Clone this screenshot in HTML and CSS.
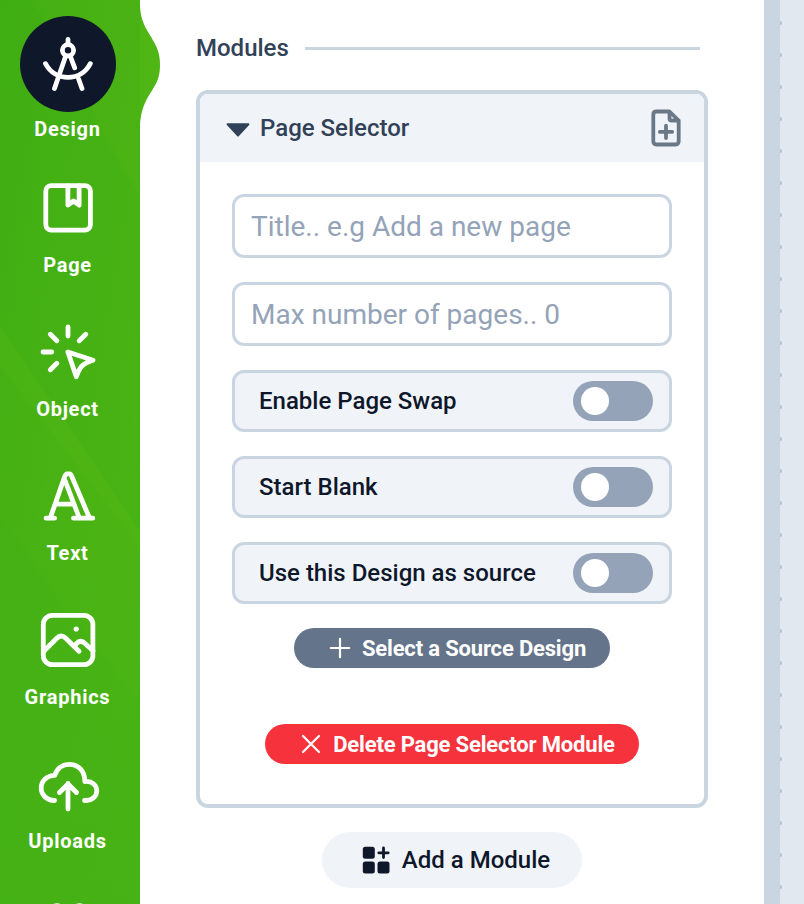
FILE: index.html
```html
<!DOCTYPE html>
<html lang="en">
<head>
<meta charset="utf-8">
<title>Design editor</title>
<link rel="stylesheet" href="styles.css">
</head>
<body>
<div class="app">
  <nav class="sidebar">
    <svg class="streaks" viewBox="0 0 140 904" aria-hidden="true">
      <path d="M33 0H140V196Q104 140 80 82Z" opacity=".035"/>
      <path d="M0 325L140 532V546L0 366Z" opacity=".05"/>
      <path d="M0 515L62 604L140 702V546L0 366Z" opacity=".025"/>
    </svg>
    <svg class="bump" viewBox="0 0 20 130" aria-hidden="true"><path d="M-1 0H0V6C1 25 9 32 14 42C18 49 20 56 20 65C20 74 18 81 14 87C9 96 1 105 0 126H-1Z"/></svg>
    <a class="item active">
      <svg class="icon" viewBox="0 0 96 96"><path d="M48 23.500v4M45 42L34.500 72.500M51 42L54.700 51.800M58.600 63L62 72.500M25.500 47.700C35 66 61 66 70.300 47.700"/><circle cx="48" cy="34.300" r="5.600"/></svg>
      <span>Design</span>
    </a>
    <a class="item">
      <svg class="icon" viewBox="0 0 96 96"><rect x="25.800" y="25.700" width="44.600" height="44.400" rx="5.500"/><path d="M47.900 26V45.200L53.500 41L59.100 45.200V26"/></svg>
      <span>Page</span>
    </a>
    <a class="item">
      <svg class="icon" viewBox="0 0 96 96"><path d="M48 23v9M23 48h8.700M30.300 30.200l6.600 6.600M65.800 30.200l-6.600 6.600M30.300 65.800l6.600-6.600M47.900 48L73 56.300Q65 59 62 62Q59 65 56.300 72.800Z"/></svg>
      <span>Object</span>
    </a>
    <a class="item">
      <svg class="icon" viewBox="0 0 96 96"><path d="M26 70.200h8.600M53.500 70.200h19.300M30.300 70L44.500 29Q45.600 25.800 47 25.800H49.500Q51 25.800 52 29L69.500 70M44.500 31L59.300 70M36 56.200H53.500"/></svg>
      <span>Text</span>
    </a>
    <a class="item">
      <svg class="icon" viewBox="0 0 96 96"><rect x="23.300" y="23.300" width="49.600" height="49.400" rx="9"/><path d="M23.500 59.500L36.500 46.500Q41 41.800 45.500 46L59 59.300M54.500 55L56.500 51.500Q60 47.500 64.500 51L73 58.800"/><circle class="dot" cx="56.200" cy="37" r="2.600"/></svg>
      <span>Graphics</span>
    </a>
    <a class="item">
      <svg class="icon" viewBox="0 0 96 96"><path d="M34.600 64.500C27 64.500 21.200 59 21.200 52C21.200 45 27 39.500 34.800 39.300C37 32.500 42.500 28.300 49.500 28.300C58 28.300 65 35 64.800 45.500C72 44.500 76.800 49.500 76.800 54.800C76.800 60.500 72 64.500 64.500 64.500M48 47.500V73M39.500 56.500L48 48L56.500 56.500"/></svg>
      <span>Uploads</span>
    </a>
    <a class="item">
      <svg class="icon" viewBox="0 0 96 96"><circle cx="37" cy="31.300" r="5.700"/><circle cx="59.500" cy="31.300" r="5.700"/></svg>
    </a>
  </nav>

  <main class="panel">
    <div class="section-title"><h2>Modules</h2><hr></div>
    <section class="card">
      <header class="card-head">
        <svg class="caret" viewBox="0 0 24 14"><path d="M1.600 1.300H22.400L12 12.600Z"/></svg>
        <h3>Page Selector</h3>
        <svg class="add-page" viewBox="0 0 32 40"><path d="M19.500 3.500H6.500Q3.300 3.500 3.300 6.700V33.300Q3.300 36.500 6.500 36.500H25.500Q28.700 36.500 28.700 33.300V12.500ZM19.500 3.500V10.500Q19.500 12.500 21.500 12.500H28.700M16 17.700V30M9.800 23.800H22.200"/></svg>
      </header>
      <div class="card-body">
        <input class="field" type="text" placeholder="Title.. e.g Add a new page">
        <input class="field" type="text" placeholder="Max number of pages.. 0">
        <div class="option"><span>Enable Page Swap</span><i class="switch"></i></div>
        <div class="option"><span>Start Blank</span><i class="switch"></i></div>
        <div class="option"><span>Use this Design as source</span><i class="switch"></i></div>
        <button class="pill source"><svg viewBox="0 0 24 24"><path d="M12 2.800V21.200M2.800 12H21.200"/></svg>Select a Source Design</button>
        <button class="pill delete"><svg viewBox="0 0 24 24"><path d="M4 4L20 20M20 4L4 20"/></svg>Delete Page Selector Module</button>
      </div>
    </section>
    <button class="add-module"><svg viewBox="0 0 28 28"><rect x=".8" y=".8" width="12" height="12" rx="2.500"/><rect x=".8" y="15.500" width="12" height="12" rx="2.500"/><rect x="15.500" y="15.500" width="12" height="12" rx="2.500"/><path d="M21.500 2V11.500M16.800 6.800H26.200"/></svg>Add a Module</button>
  </main>
  <div class="divider"></div>
  <div class="canvas"></div>
</div>
</body>
</html>
```
FILE: styles.css
```css
* { box-sizing: border-box; }
body { margin: 0; font-family: Roboto, "Liberation Sans", sans-serif; color: #314158; background: #fff; }
h2, h3 { margin: 0; font-size: 24px; line-height: 32px; font-weight: 500; }
button { border: 0; padding: 0; font-family: inherit; }

.app { display: flex; height: 904px; overflow: hidden; }

.sidebar {
  position: relative;
  flex: 0 0 140px;
  padding-top: 16px;
  background:
    linear-gradient(to bottom, rgba(68, 177, 20, 0) 40%, rgba(68, 177, 20, .8) 100%),
    linear-gradient(100deg, #3fae13 0%, #48b214 60%, #4db515 100%);
}
.streaks { position: absolute; inset: 0; width: 140px; height: 904px; fill: #c8f020; }
.bump { position: absolute; left: 140px; top: 0; width: 20px; height: 130px; fill: #50b615; }
.item { position: relative; display: flex; flex-direction: column; align-items: center; width: 136px; height: 144px; color: #fff; }
.icon {
  width: 96px;
  height: 96px;
  flex: none;
  border-radius: 50%;
  fill: none;
  stroke: #fff;
  stroke-width: 4.800;
  stroke-linecap: round;
  stroke-linejoin: round;
}
.icon .dot { fill: #fff; stroke: none; }
.item span { margin: -3px 1px 0 0; font-size: 20px; line-height: 24px; font-weight: 700; letter-spacing: .75px; }
.active .icon { background: #0f172b; }
.active span { margin-top: 5px; }

.panel { flex: 0 0 624px; padding: 32px 56px 0; display: flex; flex-direction: column; align-items: center; }
.section-title { display: flex; align-items: center; gap: 16px; width: 512px; padding-right: 8px; height: 32px; }
.section-title hr { flex: 1; height: 3px; margin: 1px 0 0; border: 0; background: #cad5e2; }

.card { width: 512px; height: 718px; margin-top: 26px; border: 4px solid #cad5e2; border-radius: 12px; overflow: hidden; }
.card-head { display: flex; align-items: center; height: 68px; padding: 0 22px 0 26px; background: #f0f4f9; }
.caret { width: 24px; height: 14px; margin-top: 3px; fill: #314158; stroke: #314158; stroke-width: 2; stroke-linejoin: round; }
.card-head h3 { flex: 1; margin-left: 10px; }
.add-page { width: 32px; height: 40px; fill: none; stroke: #6b7885; stroke-width: 3.800; stroke-linecap: round; stroke-linejoin: round; }

.card-body { display: flex; flex-direction: column; align-items: center; gap: 24px; padding: 32px; }
.field {
  width: 440px;
  height: 64px;
  padding: 0 16px;
  border: 3px solid #cad5e2;
  border-radius: 12px;
  font: 400 28px Roboto, sans-serif;
  background: #fff;
}
.field::placeholder { color: #94a3b8; opacity: 1; }
.option {
  display: flex;
  align-items: center;
  justify-content: space-between;
  width: 440px;
  height: 62px;
  padding: 0 16px 0 24px;
  border: 3px solid #cad5e2;
  border-radius: 12px;
  background: #f0f4f9;
  color: #0f172b;
  font-size: 24px;
  font-weight: 500;
}
.switch { width: 80px; height: 40px; padding: 6px 8px; border-radius: 20px; background: #94a3b8; }
.switch::before { content: ""; display: block; width: 28px; height: 28px; border-radius: 50%; background: #fff; }

.pill { display: flex; align-items: center; justify-content: center; height: 40px; border-radius: 20px; color: #fff; font-size: 22px; font-weight: 700; letter-spacing: -.17px; padding-left: 10px; }
.pill svg { width: 24px; height: 24px; margin-right: 10px; fill: none; stroke: #fff; stroke-width: 2.200; stroke-linecap: round; }
.source { width: 316px; background: #64748b; }
.delete { width: 374px; margin-top: 32px; background: #f6333c; }

.add-module { display: flex; align-items: center; justify-content: center; width: 260px; height: 56px; margin-top: 24px; padding-left: 8px; border-radius: 28px; background: #f0f4f9; color: #0f172b; font-size: 24px; font-weight: 500; }
.add-module svg { width: 28px; height: 28px; margin-right: 12px; fill: #0f172b; stroke: #0f172b; stroke-width: 0; stroke-linecap: round; }
.add-module path { stroke-width: 2.800; }

.divider { flex: 0 0 16px; background: #cad5e2; }
.canvas { flex: 1; background: radial-gradient(circle at 0 23px, #b7c3d4 1.800px, transparent 2.300px) 0 0 / 32px 32px repeat-y #e2e8f0; }
```
